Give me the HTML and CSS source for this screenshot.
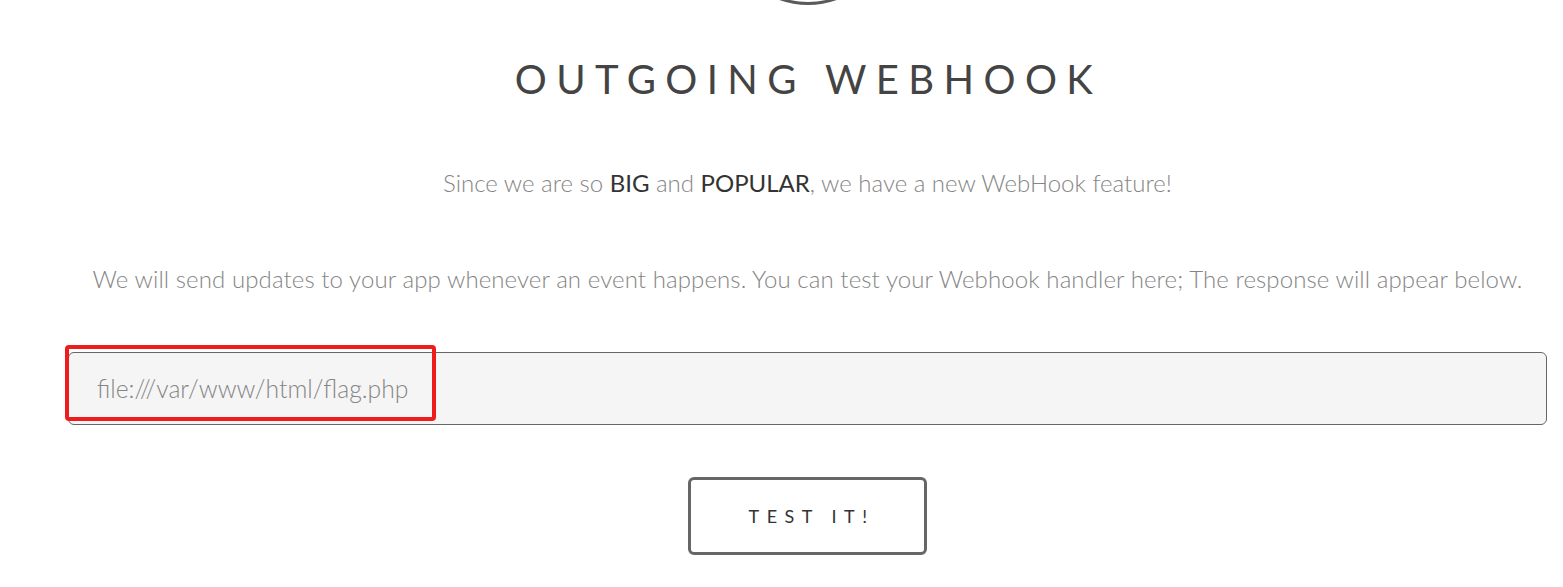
FILE: index.html
```html
<!DOCTYPE html>
<html>
<head>
<meta charset="utf-8">
<link rel="stylesheet" href="styles.css">
</head>
<body>
<div class="page">
  <div class="logo"></div>
  <h1 class="title">OUTGOING WEBHOOK</h1>
  <p class="lead">Since we are so <b>BIG</b> and <b>POPULAR</b>, we have a new WebHook feature!</p>
  <p class="lead second">We will send updates to your app whenever an event happens. You can test your Webhook handler here; The response will appear below.</p>
  <div class="field">
    <input class="url" type="text" value="file:///var/www/html/flag.php">
    <div class="mark"></div>
  </div>
  <div class="actions">
    <button class="btn">TEST IT!</button>
  </div>
</div>
</body>
</html>
```
FILE: styles.css
```css
html, body {
  margin: 0;
  padding: 0;
  background: #fff;
  overflow: hidden;
}
body {
  font-family: "Source Sans Pro", Lato, "Open Sans", sans-serif;
  color: #888;
}
.page {
  padding: 0 16px 0 68px;
  display: flex;
  flex-direction: column;
  align-items: center;
}
.logo {
  width: 170px;
  height: 170px;
  box-sizing: border-box;
  border: 3px solid #5a5a5a;
  border-radius: 50%;
  margin-top: -165px;
}
.title {
  margin: 46px 0 0;
  font-size: 40px;
  font-weight: 400;
  letter-spacing: 9.4px;
  color: #444;
  line-height: 56px;
  padding-left: 2px;
}
.lead {
  margin: 61px 0 0;
  font-size: 24px;
  font-weight: 300;
  line-height: 30px;
  color: #858585;
  text-align: center;
}
.lead b {
  font-weight: 400;
  color: #333;
}
.second {
  margin-top: 66px;
  letter-spacing: 0.1px;
}
.field {
  position: relative;
  align-self: stretch;
  margin-top: 58px;
}
.url {
  display: block;
  width: 100%;
  box-sizing: border-box;
  height: 73px;
  border: 1px solid #666;
  border-radius: 6px;
  background: #f5f5f5;
  padding: 0 28px;
  font-family: inherit;
  font-size: 24.7px;
  font-weight: 300;
  color: #858585;
  outline: none;
}
.mark {
  position: absolute;
  left: -3px;
  top: -7px;
  width: 371px;
  height: 76px;
  box-sizing: border-box;
  border: 4px solid #ee1c1c;
  border-radius: 4px;
  pointer-events: none;
}
.actions {
  margin-top: 52px;
}
.btn {
  width: 239px;
  height: 78px;
  box-sizing: border-box;
  border: 3px solid #666;
  border-radius: 6px;
  background: #fff;
  font-family: inherit;
  font-size: 18px;
  font-weight: 400;
  letter-spacing: 7.5px;
  padding: 0 0 0 8px;
  color: #333;
}
```
